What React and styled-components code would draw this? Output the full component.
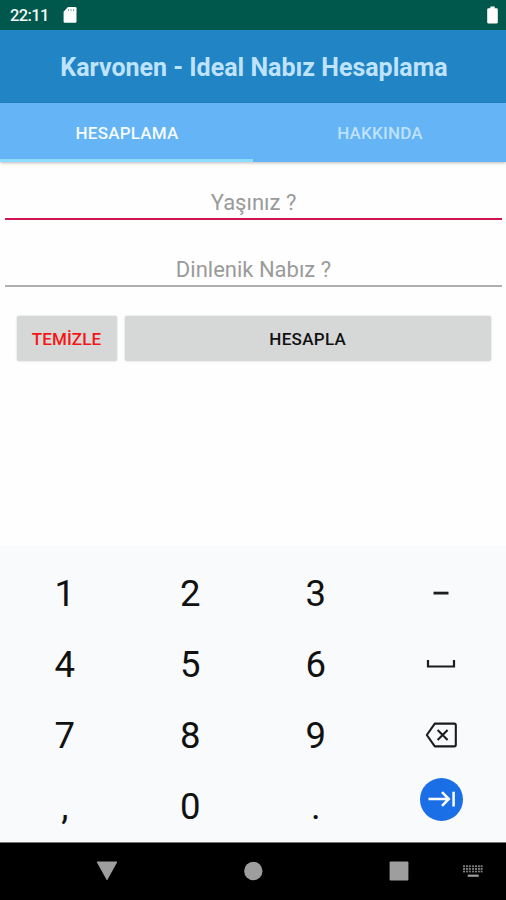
import React, { useState } from 'react';
import styled, { createGlobalStyle } from 'styled-components';

const GlobalStyle = createGlobalStyle`
    * {
        box-sizing: border-box;
    }
    body {
        margin: 0;
        background: white;
        font-family: Roboto, "Noto Sans", sans-serif;
    }
    button, input {
        font-family: inherit;
    }
`

const Phone = styled.div`
    width: 506px;
    height: 900px;
    display: flex;
    flex-direction: column;
    overflow: hidden;
    background: #fefefe;
`

const StatusBar = styled.div`
    height: 30px;
    flex: none;
    display: flex;
    align-items: center;
    padding: 0 8px 0 10px;
    background: #00574b;
    color: #f2fbf9;
`

const Clock = styled.span`
    width: 53px;
    font-size: 16.5px;
    font-weight: 500;
    line-height: 20px;
    padding-top: 1px;
    letter-spacing: -0.6px;
`

const BatteryIcon = styled.svg`
    margin-left: auto;
`

const Header = styled.header`
    height: 72.5px;
    flex: none;
    display: flex;
    align-items: center;
    justify-content: center;
    padding: 3px 0 0 2px;
    background: #2185c5;
`

const Title = styled.h1`
    margin: 0;
    font-size: 25px;
    font-weight: 700;
    line-height: 30px;
    color: #bfe3fd;
`

const TabBar = styled.nav`
    height: 59px;
    flex: none;
    display: flex;
    background: #64b4f6;
    box-shadow: 0 1px 3px rgba(0, 0, 0, 0.28);
`

const Tab = styled.button`
    flex: 1;
    border: 0;
    border-bottom: 3px solid ${props => props.$active ? '#8edcff' : 'transparent'};
    background: none;
    padding: 5px 0 0 1px;
    font-size: 17px;
    font-weight: 500;
    letter-spacing: 0.2px;
    color: ${props => props.$active ? '#f5fbff' : '#bfe2fc'};
`

const Form = styled.form`
    flex: 1;
    padding: 24px 4px 0 5px;
`

const Field = styled.input`
    display: block;
    width: 100%;
    height: ${props => props.$focused ? '34.5px' : '34px'};
    margin-bottom: ${props => props.$focused ? '33px' : '29px'};
    padding: ${props => props.$focused ? '2px 0 0' : '1px 0 0'};
    border: 0;
    border-bottom: ${props => props.$focused ? '2.5px solid #d0144f' : '2px solid #b0b0b0'};
    border-radius: 0;
    outline: 0;
    background: none;
    font-size: 22px;
    text-align: center;
    color: #222;

    &::placeholder {
        color: #9a9a9a;
        opacity: 1;
    }
`

const ButtonRow = styled.div`
    display: flex;
    gap: 8.5px;
    padding: 0 11.5px;
`

const Button = styled.button`
    height: 45px;
    flex: ${props => props.$wide ? '1' : '0 0 100px'};
    padding: 1px 0 0;
    border: 0;
    border-radius: 2px;
    background: #d6d8d7;
    box-shadow: 0 0 2px rgba(0, 0, 0, 0.22);
    font-size: 17px;
    font-weight: 500;
    letter-spacing: ${props => props.$wide ? '0.3px' : '0.1px'};
    color: ${props => props.$color};
`

const Keypad = styled.div`
    height: 296px;
    flex: none;
    display: grid;
    grid-template-columns: repeat(4, 1fr);
    grid-auto-rows: 71px;
    padding: 12px 2px 0;
    background: #f8fafb;
`

const Key = styled.button`
    display: flex;
    align-items: center;
    justify-content: center;
    padding: ${props => props.$lift ? `0 0 ${props.$lift}` : '1px 0 0'};
    border: 0;
    background: none;
    font-size: 36.5px;
    line-height: 42px;
    color: #111;
`

const EnterCircle = styled.span`
    width: 43px;
    height: 43px;
    display: flex;
    align-items: center;
    justify-content: center;
    border-radius: 50%;
    background: #1a6fe6;
`

const NavBar = styled.div`
    height: 58.5px;
    flex: none;
    display: flex;
    align-items: center;
    padding: 0 23px 0 96px;
    background: black;
    border-top: 1px solid #777;
    color: #9e9e9e;
`

const NavIcon = styled.svg`
    flex: none;
    margin-right: ${props => props.$gap || '0'};
    fill: currentColor;
`

const MinusIcon = () => (
    <svg width="16" height="4" viewBox="0 0 16 4">
        <rect x="0.5" y="0.7" width="15" height="2.8" fill="#1c1c1c" />
    </svg>
)

const SpaceIcon = () => (
    <svg width="30" height="10" viewBox="0 0 30 10" fill="none" stroke="#1c1c1c" strokeWidth="2.2">
        <path d="M2 1v6.5h26V1" />
    </svg>
)

const BackspaceIcon = () => (
    <svg width="32" height="26" viewBox="0 0 32 26" fill="none" stroke="#1c1c1c" strokeWidth="2.1">
        <path d="M9.8 1.6h19.3q1.7 0 1.7 1.7v19.4q0 1.7-1.7 1.7H9.8L1.8 13z" strokeLinejoin="round" />
        <path d="M12.6 8l10 10M22.6 8l-10 10" />
    </svg>
)

const EnterIcon = () => (
    <svg width="29" height="18" viewBox="0 0 29 18" fill="none" stroke="white" strokeWidth="2.5">
        <path d="M1.5 9h20M15 2.2L21.8 9 15 15.8M26.6 1.8v14.6" />
    </svg>
)

const KeyboardIcon = () => (
    <NavIcon width="20" height="13" viewBox="0 0 20 13">
        {[0, 2.9, 5.8, 9.1, 12, 14.9, 17.6].map(x => (
            <g key={x} opacity="0.8">
                <rect x={x} y="0.3" width="2" height="1.9" />
                <rect x={x} y="3" width="2" height="1.9" />
                <rect x={x} y="5.7" width="2" height="1.7" />
            </g>
        ))}
        <rect x="4.7" y="9.6" width="11" height="2.2" />
    </NavIcon>
)

const keys = [
    { id: '1' }, { id: '2' }, { id: '3' }, { id: 'minus', label: <MinusIcon />, lift: '1px' },
    { id: '4' }, { id: '5' }, { id: '6' }, { id: 'space', label: <SpaceIcon />, lift: '1px' },
    { id: '7' }, { id: '8' }, { id: '9' }, { id: 'backspace', label: <BackspaceIcon />, lift: '1px' },
    { id: ',' }, { id: '0' }, { id: '.' },
    { id: 'enter', label: <EnterCircle><EnterIcon /></EnterCircle>, lift: '14px' },
]

const App = () => {

    const [ tab, setTab ] = useState('calc');
    const [ focused, setFocused ] = useState('age');
    const [ values, setValues ] = useState({ age: '', pulse: '' });

    const handleChange = (e) => {
        setValues({
            ...values,
            [e.target.name]: e.target.value,
        })
    }

    const handleKey = (id) => {
        const current = values[focused]
        if (id === 'backspace') {
            setValues({ ...values, [focused]: current.slice(0, -1) })
        } else if (id === 'enter') {
            setFocused('pulse')
        } else if (id.length === 1) {
            setValues({ ...values, [focused]: current + id })
        }
    }

    return (
        <Phone>
            <GlobalStyle />
            <StatusBar>
                <Clock>22:11</Clock>
                <svg width="14" height="16" viewBox="0 0 14 16">
                    <path d="M5 0h7.3Q13.5 0 13.5 1.2v13.3q0 1.2-1.2 1.2H1.8q-1.2 0-1.2-1.2V4.7z" fill="#fff" />
                    <path d="M5.4 2v2.2M8 2v2.2M10.6 2v2.2" stroke="#00574b" strokeWidth="1" opacity="0.5" />
                </svg>
                <BatteryIcon width="11" height="18" viewBox="0 0 11 18">
                    <path d="M3.3 0.4h4.4v1.8h1.8q1.3 0 1.3 1.3v12.7q0 1.3-1.3 1.3h-8q-1.3 0-1.3-1.3V3.5q0-1.3 1.3-1.3h1.8z" fill="#fff" />
                </BatteryIcon>
            </StatusBar>
            <Header>
                <Title>Karvonen - Ideal Nabız Hesaplama</Title>
            </Header>
            <TabBar>
                <Tab $active={tab === 'calc'} onClick={() => setTab('calc')}>HESAPLAMA</Tab>
                <Tab $active={tab === 'about'} onClick={() => setTab('about')}>HAKKINDA</Tab>
            </TabBar>
            <Form onSubmit={e => e.preventDefault()}>
                <Field
                    name="age"
                    placeholder="Yaşınız ?"
                    value={values.age}
                    $focused={focused === 'age'}
                    onFocus={() => setFocused('age')}
                    onChange={handleChange}
                />
                <Field
                    name="pulse"
                    placeholder="Dinlenik Nabız ?"
                    value={values.pulse}
                    $focused={focused === 'pulse'}
                    onFocus={() => setFocused('pulse')}
                    onChange={handleChange}
                />
                <ButtonRow>
                    <Button type="button" $color="#f81414" onClick={() => setValues({ age: '', pulse: '' })}>TEMİZLE</Button>
                    <Button $wide $color="#111">HESAPLA</Button>
                </ButtonRow>
            </Form>
            <Keypad>
                {keys.map(key => (
                    <Key key={key.id} $lift={key.lift} onClick={() => handleKey(key.id)}>
                        {key.label || key.id}
                    </Key>
                ))}
            </Keypad>
            <NavBar>
                <NavIcon $gap="125px" width="22" height="20" viewBox="0 0 22 20">
                    <path d="M1.5 0.5h19q1 0 .5 1L11.6 18.6q-.6 1-1.2 0L1 1.5q-.5-1 .5-1z" />
                </NavIcon>
                <NavIcon $gap="126px" width="20" height="20" viewBox="0 0 20 20">
                    <circle cx="10.3" cy="10" r="9.2" />
                </NavIcon>
                <NavIcon $gap="54px" width="20" height="20" viewBox="0 0 20 20">
                    <rect x="0.6" y="0.6" width="18.8" height="18.8" rx="1" />
                </NavIcon>
                <KeyboardIcon />
            </NavBar>
        </Phone>
    )
}

export default App
